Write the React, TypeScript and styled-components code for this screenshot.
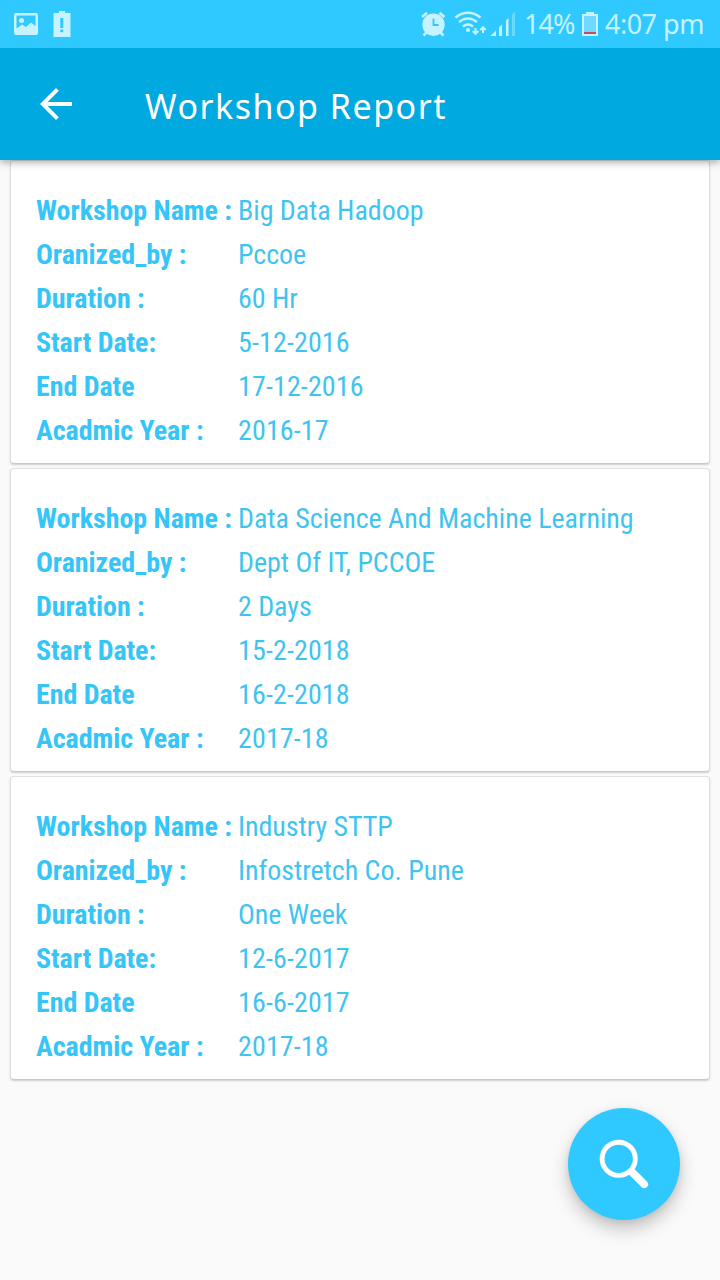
import React from "react";
import styled, { createGlobalStyle } from "styled-components";

const Global = createGlobalStyle`
  * { box-sizing: border-box; }
  body { margin: 0; background: #fafafa; font-family: Roboto, "Liberation Sans", sans-serif; }
`;
const Screen = styled.div`
  width: 720px; height: 1280px; overflow: hidden; background: #fafafa;
  display: flex; flex-direction: column;
`;
const StatusBar = styled.header`
  height: 48px; flex: none; background: #2fc9ff; color: #c6f3ff; position: relative; z-index: 2;
  display: flex; align-items: center; justify-content: space-between; padding: 0 16px 0 14px;
`;
const StatusGroup = styled.div`display: flex; align-items: center;`;
const StatusText = styled.span<{ $width: number; $gap?: string; $spacing?: number }>`
  width: ${p => p.$width}px; white-space: nowrap; margin: ${p => p.$gap ?? "0"};
  font: 400 27px/48px "Noto Sans", sans-serif; letter-spacing: ${p => p.$spacing ?? 0}px;
`;
const AppBar = styled.div`
  height: 112px; flex: none; background: #00a9e0; position: relative; z-index: 1;
  box-shadow: 0 2px 8px rgba(0,0,0,.36); display: flex; align-items: center; padding-left: 32px;
`;
const BackButton = styled.button`
  border: 0; padding: 0; background: none; width: 48px; height: 48px; display: block;
`;
const Title = styled.h1`
  margin: 4px 0 0 65px; font: 400 34px/48px "Noto Sans", sans-serif; color: #fff;
  letter-spacing: 1.5px; white-space: nowrap;
`;
const List = styled.main`display: flex; flex-direction: column; gap: 4px; padding: 0 10px;`;
const Card = styled.section`
  height: 304px; background: #fff; border-radius: 4px;
  border: 1px solid #dedede; border-bottom-color: #c8c8c8; border-top-color: #e2e2e2;
  padding: 28px 25px 10px; box-shadow: 0 1px 2px rgba(0,0,0,.18);
`;
const Row = styled.div`
  height: 44px; display: grid; grid-template-columns: 202px 1fr;
  font-size: 28px; line-height: 44px; color: #3fc4f1; white-space: nowrap; font-stretch: 75%;
`;
const Label = styled.strong`font-weight: 700; color: #35c5f8; letter-spacing: -0.04px;`;
const Value = styled.span<{ $numeric: boolean }>`
  font-weight: 400; letter-spacing: ${p => (p.$numeric ? 0.12 : -0.04)}px;
`;
const Fab = styled.button`
  position: absolute; left: 568px; top: 1108px; width: 112px; height: 112px; border: 0; padding: 0;
  border-radius: 50%; background: #2fc9ff; box-shadow: 0 9px 18px rgba(0,0,0,.22), 0 2px 6px rgba(0,0,0,.08);
`;

const labels = ["Workshop Name :", "Oranized_by :", "Duration :", "Start Date:", "End Date", "Acadmic Year :"];
const workshops = [
  ["Big Data Hadoop", "Pccoe", "60 Hr", "5-12-2016", "17-12-2016", "2016-17"],
  ["Data Science And Machine Learning", "Dept Of IT, PCCOE", "2 Days", "15-2-2018", "16-2-2018", "2017-18"],
  ["Industry STTP", "Infostretch Co. Pune", "One Week", "12-6-2017", "16-6-2017", "2017-18"],
];

const NoticeIcons = () => (
  <svg width="58" height="48" viewBox="14 0 58 48">
    <path fill="#c6f3ff" fillRule="evenodd" d="M16 13h20q2 0 2 2v18q0 2-2 2H16q-2 0-2-2V15q0-2 2-2Zm.5 2.500v13l5.500-4 4 2.500 5-4.500 4.500 3.500v-10.500Z" />
    <circle cx="21.500" cy="20.500" r="2.500" fill="#c6f3ff" />
    <path fill="#c6f3ff" fillRule="evenodd" d="M59 11h6v2h5.500v24H53.500V13H59ZM60.300 18v10h3V18Zm0 11.500v2.700h3v-2.700Z" />
  </svg>
);
const RadioIcons = () => (
  <svg width="96" height="48" viewBox="421 0 96 48">
    <g stroke="#c6f3ff" fill="none" strokeWidth="2.6">
      <path d="m422 17 5-4.300M439.500 12.700l5 4.300M427 32l-3.500 3.500M440 32l3.500 3.500" />
      <path d="M455.500 17.500q12.500-9.500 25 0M459 22q9-7 18 0M463 26.500q5-4 10 0" />
      <path strokeWidth="2" d="M475.500 28v6M472.700 31l2.800 2.800 2.800-2.800M483 33v-6M480.200 30l2.800-2.800 2.800 2.800" />
    </g>
    <circle cx="433.500" cy="24.700" r="11.200" fill="#c6f3ff" />
    <path d="M433.500 18.500v6.500h5" fill="none" stroke="#2fc9ff" strokeWidth="1.800" />
    <circle cx="468" cy="30" r="2" fill="#c6f3ff" />
    <path fill="#c6f3ff" d="m490.500 36 5.500-5.500V36ZM499 27.500l3-3V36h-3ZM506 20.500l2.500-2.500v18H506Z" />
    <path fill="#c6f3ff" opacity=".4" d="m512 14.500 3-3V36h-3Z" />
  </svg>
);
const BatteryIcon = () => (
  <svg width="16" height="48" viewBox="582 0 16 48">
    <path d="M586 12h8v2h4v22h-16V14h4Z" fill="#c6f3ff" /><path d="M584 16h12v16h-12Z" fill="#70d9ff" />
    <path d="M584 32h12v2h-12Z" fill="#c84868" />
  </svg>
);

export default function App() {
  return (
    <Screen>
      <Global />
      <StatusBar>
        <StatusGroup><NoticeIcons /></StatusGroup>
        <StatusGroup>
          <RadioIcons />
          <StatusText $width={51} $gap="0 7px" $spacing={-1}>14%</StatusText>
          <BatteryIcon />
          <StatusText $width={99} $gap="0 0 0 7px" $spacing={-0.5}>4:07 pm</StatusText>
        </StatusGroup>
      </StatusBar>
      <AppBar>
        <BackButton aria-label="Back">
          <svg width="48" height="48" viewBox="0 0 24 24"><path fill="#fff" d="M20 11H7.830l5.590-5.590L12 4l-8 8 8 8 1.410-1.410L7.830 13H20z" /></svg>
        </BackButton>
        <Title>Workshop Report</Title>
      </AppBar>
      <List>
        {workshops.map((values, i) => (
          <Card key={i}>
            {labels.map((label, j) => <Row key={label}><Label>{label}</Label><Value $numeric={j > 2}>{values[j]}</Value></Row>)}
          </Card>
        ))}
      </List>
      <Fab aria-label="Search">
        <svg width="112" height="112" viewBox="568 1108 112 112" fill="none" stroke="#fff">
          <circle cx="618.700" cy="1158.800" r="16.600" strokeWidth="4.900" />
          <path d="m633 1173 11.200 11.200" strokeWidth="7.800" strokeLinecap="round" />
        </svg>
      </Fab>
    </Screen>
  );
}
